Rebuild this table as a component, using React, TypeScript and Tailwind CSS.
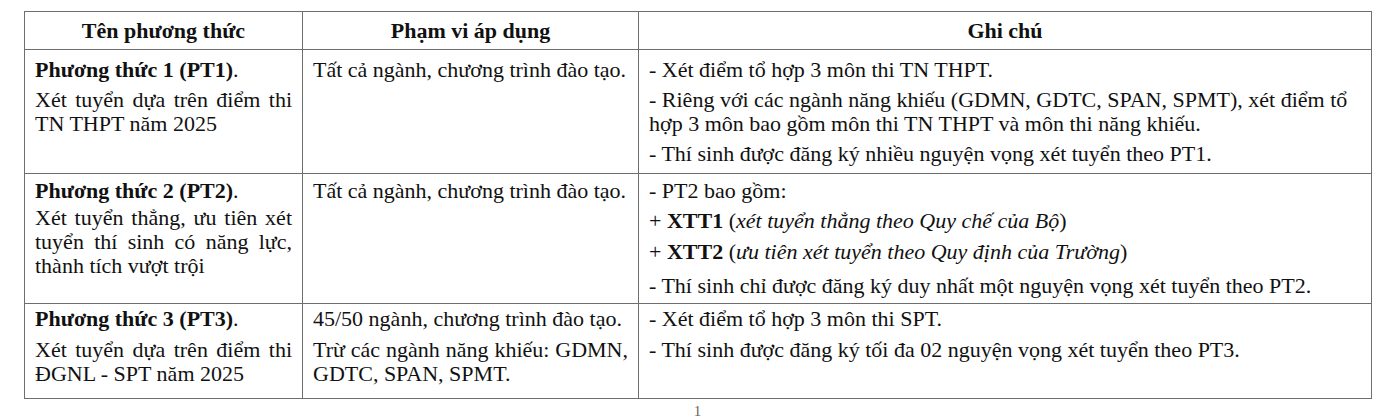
import React from "react";

const b = "border border-[#6e6e6e] align-top px-[10px] pb-[4px]";

function Para({
  children,
  first = false,
  justify = false,
  gap = "mt-[6px]",
}: {
  children: React.ReactNode;
  first?: boolean;
  justify?: boolean;
  gap?: string;
}) {
  return (
    <p
      className={
        (first ? "" : gap + " ") + (justify ? "text-justify" : "text-left")
      }
    >
      {children}
    </p>
  );
}

export default function App() {
  return (
    <div className="w-[1390px] h-[420px] bg-white overflow-hidden font-['Liberation_Serif','Times_New_Roman',serif] text-[22px] leading-[24px] text-[#111]">
      <div className="pt-[11px] pl-[24px]">
        <table className="table-fixed border-collapse w-[1347px]">
          <colgroup>
            <col className="w-[278px]" />
            <col className="w-[336px]" />
            <col className="w-[733px]" />
          </colgroup>
          <thead>
            <tr className="h-[38px]">
              <th className="border border-[#6e6e6e] font-bold text-center align-middle">
                Tên phương thức
              </th>
              <th className="border border-[#6e6e6e] font-bold text-center align-middle">
                Phạm vi áp dụng
              </th>
              <th className="border border-[#6e6e6e] font-bold text-center align-middle">
                Ghi chú
              </th>
            </tr>
          </thead>
          <tbody>
            <tr className="h-[124px]">
              <td className={b + " pt-[8px]"}>
                <Para first>
                  <b>Phương thức 1 (PT1)</b>.
                </Para>
                <Para justify>Xét tuyển dựa trên điểm thi TN THPT năm 2025</Para>
              </td>
              <td className={b + " pt-[8px]"}>
                <Para first>Tất cả ngành, chương trình đào tạo.</Para>
              </td>
              <td className={b + " pt-[8px]"}>
                <Para first>- Xét điểm tổ hợp 3 môn thi TN THPT.</Para>
                <Para>
                  - Riêng với các ngành năng khiếu (GDMN, GDTC, SPAN, SPMT), xét
                  điểm tổ
                  <br />
                  hợp 3 môn bao gồm môn thi TN THPT và môn thi năng khiếu.
                </Para>
                <Para>- Thí sinh được đăng ký nhiều nguyện vọng xét tuyển theo PT1.</Para>
              </td>
            </tr>
            <tr className="h-[130px]">
              <td className={b + " pt-[5px]"}>
                <Para first>
                  <b>Phương thức 2 (PT2)</b>.
                </Para>
                <Para justify gap="mt-[3px]">
                  Xét tuyển thẳng, ưu tiên xét tuyển thí sinh có năng lực, thành
                  tích vượt trội
                </Para>
              </td>
              <td className={b + " pt-[5px]"}>
                <Para first>Tất cả ngành, chương trình đào tạo.</Para>
              </td>
              <td className={b + " pt-[5px]"}>
                <Para first>- PT2 bao gồm:</Para>
                <Para>
                  + <b>XTT1</b> (<i>xét tuyển thẳng theo Quy chế của Bộ</i>)
                </Para>
                <Para gap="mt-[7px]">
                  + <b>XTT2</b> (<i>ưu tiên xét tuyển theo Quy định của Trường</i>)
                </Para>
                <Para gap="mt-[10px]">
                  - Thí sinh chỉ được đăng ký duy nhất một nguyện vọng xét tuyển
                  theo PT2.
                </Para>
              </td>
            </tr>
            <tr className="h-[95px]">
              <td className={b + " pt-[3px]"}>
                <Para first>
                  <b>Phương thức 3 (PT3)</b>.
                </Para>
                <Para justify gap="mt-[7px]">
                  Xét tuyển dựa trên điểm thi ĐGNL - SPT năm 2025
                </Para>
              </td>
              <td className={b + " pt-[3px]"}>
                <Para first>45/50 ngành, chương trình đào tạo.</Para>
                <Para justify gap="mt-[7px]">
                  Trừ các ngành năng khiếu: GDMN, GDTC, SPAN, SPMT.
                </Para>
              </td>
              <td className={b + " pt-[3px]"}>
                <Para first>- Xét điểm tổ hợp 3 môn thi SPT.</Para>
                <Para gap="mt-[7px]">
                  - Thí sinh được đăng ký tối đa 02 nguyện vọng xét tuyển theo PT3.
                </Para>
              </td>
            </tr>
          </tbody>
        </table>
        <div className="w-[1347px] text-center text-[15px] leading-[15px] text-[#666] mt-[5px]">
          1
        </div>
      </div>
    </div>
  );
}
